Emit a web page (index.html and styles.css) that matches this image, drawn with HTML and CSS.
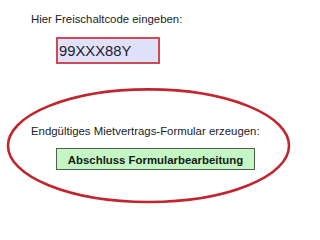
FILE: index.html
```html
<!DOCTYPE html>
<html lang="de">
<head>
<meta charset="utf-8">
<title>Freischaltcode</title>
<link rel="stylesheet" href="styles.css">
</head>
<body>
<div class="page">
  <div class="label">Hier Freischaltcode eingeben:</div>
  <div class="code">99XXX88Y</div>
  <div class="label final">Endgültiges Mietvertrags-Formular erzeugen:</div>
  <div class="btn">Abschluss Formularbearbeitung</div>
  <svg class="ring" width="300" height="211" viewBox="0 0 300 211" aria-hidden="true">
    <ellipse cx="148.5" cy="145.7" rx="140.5" ry="56.3" fill="none" stroke="#c1262e" stroke-width="2.6"/>
  </svg>
</div>
</body>
</html>
```

FILE: styles.css
```css
html, body {
  margin: 0;
  padding: 0;
  background: #ffffff;
}
.page {
  position: relative;
  width: 300px;
  height: 211px;
  box-sizing: border-box;
  padding: 12px 0 0 31px;
  font-family: "Liberation Sans", Arial, sans-serif;
  color: #222222;
  overflow: hidden;
}
.label {
  font-size: 11.4px;
  line-height: 14px;
  white-space: nowrap;
}
.code {
  margin: 11px 0 0 25px;
  width: 104px;
  height: 27px;
  box-sizing: border-box;
  border: 2px solid #cc4a55;
  background: #dfe1fb;
  font-size: 14.8px;
  color: #1c1c2a;
  padding: 1px 0 0 1px;
  display: flex;
  align-items: center;
}
.final {
  margin-top: 59.5px;
}
.btn {
  margin: 10px 0 0 25px;
  width: 199px;
  height: 22px;
  box-sizing: border-box;
  border: 1.5px solid #4f5f4f;
  background: #c5f6c4;
  font-size: 11.4px;
  font-weight: bold;
  color: #142014;
  display: flex;
  align-items: center;
  justify-content: center;
  padding-top: 2px;
}
.ring {
  position: absolute;
  left: 0;
  top: 0;
}
```
